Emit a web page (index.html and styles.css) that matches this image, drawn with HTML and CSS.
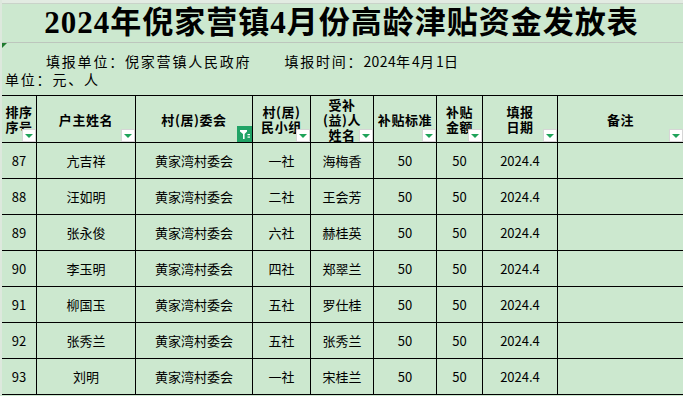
FILE: index.html
```html
<!DOCTYPE html>
<html lang="zh-CN">
<head>
<meta charset="utf-8">
<title>2024年倪家营镇4月份高龄津贴资金发放表</title>
<link rel="stylesheet" href="styles.css">
</head>
<body>
<div class="page">
  <div class="topstrip"></div>
  <div class="title">2024年倪家营镇4月份高龄津贴资金发放表</div>
  <div class="info">
    <span class="corner"></span>
    <div class="info-line first"><span>填报单位：倪家营镇人民政府</span><span class="time">填报时间：<span class="num">2024</span>年<span class="num">4</span>月<span class="num">1</span>日</span></div>
    <div class="info-line unit">单位：元、人</div>
  </div>
  <div class="sheet">
    <div class="hcell"><span>排序<br>序号</span><i class="fbtn"></i></div>
    <div class="hcell"><span>户主姓名</span><i class="fbtn"></i></div>
    <div class="hcell"><span>村(居)委会</span><i class="fact"><svg width="15" height="16" viewBox="0 0 15 16"><path d="M3 4h7v1.6L7.6 8v5H6V8L3 5.6z" fill="#fff"/><rect x="10.5" y="8" width="2.5" height="1.2" fill="#fff"/><rect x="10.5" y="10.5" width="2.5" height="1.2" fill="#fff"/></svg></i></div>
    <div class="hcell"><span>村(居)<br>民小组</span><i class="fbtn"></i></div>
    <div class="hcell tight"><span>受补<br>(益)人<br>姓名</span><i class="fbtn"></i></div>
    <div class="hcell"><span>补贴标准</span><i class="fbtn"></i></div>
    <div class="hcell"><span>补贴<br>金额</span><i class="fbtn"></i></div>
    <div class="hcell"><span>填报<br>日期</span><i class="fbtn"></i></div>
    <div class="hcell"><span>备注</span><i class="fbtn"></i></div>

    <div class="cell">87</div><div class="cell">亢吉祥</div><div class="cell">黄家湾村委会</div><div class="cell">一社</div><div class="cell">海梅香</div><div class="cell">50</div><div class="cell">50</div><div class="cell">2024.4</div><div class="cell"></div>
    <div class="cell">88</div><div class="cell">汪如明</div><div class="cell">黄家湾村委会</div><div class="cell">二社</div><div class="cell">王会芳</div><div class="cell">50</div><div class="cell">50</div><div class="cell">2024.4</div><div class="cell"></div>
    <div class="cell">89</div><div class="cell">张永俊</div><div class="cell">黄家湾村委会</div><div class="cell">六社</div><div class="cell">赫桂英</div><div class="cell">50</div><div class="cell">50</div><div class="cell">2024.4</div><div class="cell"></div>
    <div class="cell">90</div><div class="cell">李玉明</div><div class="cell">黄家湾村委会</div><div class="cell">四社</div><div class="cell">郑翠兰</div><div class="cell">50</div><div class="cell">50</div><div class="cell">2024.4</div><div class="cell"></div>
    <div class="cell">91</div><div class="cell">柳国玉</div><div class="cell">黄家湾村委会</div><div class="cell">五社</div><div class="cell">罗仕桂</div><div class="cell">50</div><div class="cell">50</div><div class="cell">2024.4</div><div class="cell"></div>
    <div class="cell">92</div><div class="cell">张秀兰</div><div class="cell">黄家湾村委会</div><div class="cell">五社</div><div class="cell">张秀兰</div><div class="cell">50</div><div class="cell">50</div><div class="cell">2024.4</div><div class="cell"></div>
    <div class="cell">93</div><div class="cell">刘明</div><div class="cell">黄家湾村委会</div><div class="cell">一社</div><div class="cell">宋桂兰</div><div class="cell">50</div><div class="cell">50</div><div class="cell">2024.4</div><div class="cell"></div>
  </div>
</div>
</body>
</html>
```

FILE: styles.css
```css
* { box-sizing: border-box; }
html, body { margin: 0; padding: 0; }
body {
  background: #cce8cf;
  font-family: "Noto Sans CJK SC", "Liberation Sans", sans-serif;
  color: #000;
  width: 683px;
  height: 396px;
  overflow: hidden;
}
.page {
  border-left: 2px solid #dde8dd;
  width: 685px;
}
.topstrip {
  height: 4px;
  background: #e2ebe2;
  border-bottom: 1px solid #c9d3c9;
}
.title {
  height: 39px;
  border-bottom: 1px solid #bdc6bd;
  text-align: center;
  font-family: "Liberation Serif", "Noto Sans CJK SC", serif;
  font-weight: 700;
  font-size: 31px;
  line-height: 38px;
  letter-spacing: 1px;
  padding-right: 4px;
}
.info {
  position: relative;
  height: 52px;
  padding-top: 9px;
  font-size: 14px;
  letter-spacing: 1.8px;
}
.corner {
  position: absolute;
  left: 0;
  top: 0;
  width: 0;
  height: 0;
  border-top: 5px solid #1f7a2e;
  border-right: 5px solid transparent;
}
.info-line { height: 18px; line-height: 18px; white-space: nowrap; }
.info-line.first { padding-left: 44px; }
.info-line .time { margin-left: 33px; }
.info-line .num { letter-spacing: 0.4px; }
.info-line.unit { padding-left: 3px; }
.sheet {
  display: grid;
  grid-template-columns: 35px 99px 117px 58px 63px 63px 46px 75px 126px;
  grid-template-rows: 47px repeat(7, 36px);
  border-top: 1px solid #000;
}
.hcell, .cell {
  border-right: 1px solid #000;
  border-bottom: 1px solid #000;
  display: flex;
  align-items: center;
  justify-content: center;
  text-align: center;
  overflow: hidden;
  position: relative;
}
.hcell {
  font-weight: 700;
  font-size: 13px;
  line-height: 15px;
  letter-spacing: 0.6px;
}
.hcell.tight { line-height: 15px; padding-top: 1px; }
.cell {
  font-size: 13px;
}
.fbtn {
  position: absolute;
  right: 0;
  bottom: 0;
  width: 14px;
  height: 13px;
  background: #fff;
  border: 1px solid #d6d6d6;
  display: flex;
  align-items: center;
  justify-content: center;
}
.fbtn::after {
  content: "";
  width: 0;
  height: 0;
  border-left: 4px solid transparent;
  border-right: 4px solid transparent;
  border-top: 4px solid #1fa35a;
}
.fact {
  position: absolute;
  right: 0;
  bottom: 0;
  width: 15px;
  height: 16px;
  background: #21a366;
  display: flex;
}
```
